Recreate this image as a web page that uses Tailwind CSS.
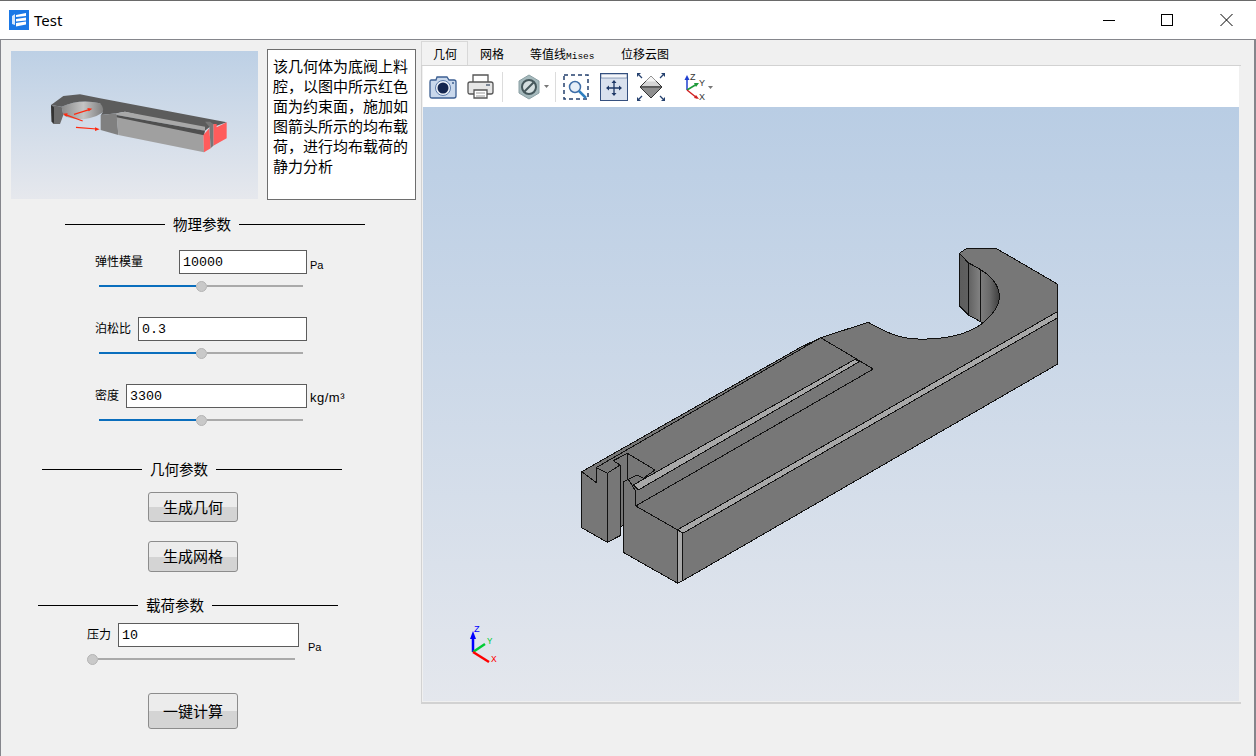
<!DOCTYPE html>
<html lang="zh">
<head>
  <meta charset="UTF-8">
  <title>Test</title>
  <script src="https://cdn.jsdelivr.net/npm/@tailwindcss/browser@4"></script>
</head>
<body class="w-[1256px] h-[756px] overflow-hidden bg-white text-black font-['Noto_Sans_CJK_SC','Noto_Sans',sans-serif]">

  <div class="h-[1px] bg-[#6a6a6a]"></div>

  <!-- Title bar -->
  <div class="h-[38px] flex items-center pl-[9px]">
    <svg class="w-[20px] h-[20px]" viewBox="0 0 20 20">
      <rect width="20" height="20" fill="#1a78e6"/>
      <path d="M3 6l3-2v11l-3-1z" fill="#d5e6fb"/>
      <path d="M7 5l10-2v3l-10 1zM7 9l10-1.500v3l-10 1zM7 13l10-1.500v3l-10 2z" fill="#ffffff"/>
    </svg>
    <span class="ml-[5px] text-[15px] font-['Noto_Sans',sans-serif]">Test</span>
    <div class="ml-auto flex items-center">
      <svg class="w-[58px] h-[14px]" viewBox="0 0 58 14"><path d="M0 7.500h12" stroke="#000" fill="none"/></svg>
      <svg class="w-[59px] h-[14px]" viewBox="0 0 59 14"><rect x="0.500" y="1.500" width="11" height="11" stroke="#000" fill="none"/></svg>
      <svg class="w-[36px] h-[14px]" viewBox="0 0 36 14"><path d="M0.500 1l12 12M12.500 1l-12 12" stroke="#000" fill="none"/></svg>
    </div>
  </div>

  <!-- Window content -->
  <div class="h-[717px] flex bg-[#f0f0f0] border-t border-l border-r-2 border-[#85868c]">

    <!-- Left panel -->
    <div class="w-[420px] shrink-0">
      <div class="mt-[9px] ml-[10px] flex items-center">
        <svg class="w-[247px] h-[148px] bg-linear-to-b from-[#bdd0e5] to-[#e6e8ed]" viewBox="33 153 741 444">
          <defs>
            <linearGradient id="wallThumb" x1="0" x2="1" y1="0" y2="0">
              <stop offset="0" stop-color="#8a8a8a"/>
              <stop offset="0.500" stop-color="#c4c4c4"/>
              <stop offset="1" stop-color="#777777"/>
            </linearGradient>
          </defs>
          <path d="M185 320Q240 295 300 310Q318 322 315 330Q300 350 250 358Q210 358 190 345z" fill="url(#wallThumb)"/>
          <path d="M153 315L190 288L240 283L300 295L680 367L648 378L640 372L615 392L375 335L350 340L303 345Q318 328 300 310Q240 295 185 320z" fill="#5c5c5c"/>
          <path d="M153 315L185 320L190 345L180 372L160 372L155 365z" fill="#6b6b6b"/>
          <path d="M153 315L162 322L162 370L155 365z" fill="#333333"/>
          <path d="M302 345L350 340L355 405L302 390z" fill="#808080"/>
          <path d="M350 348L610 402L612 457L355 405z" fill="#a0a0a0"/>
          <path d="M350 340L375 335L615 380L615 392L350 345z" fill="#a8a8a8"/>
          <path d="M350 345L615 392L612 406L350 352z" fill="#4f4f4f"/>
          <path d="M610 405L628 385L632 445L612 457z" fill="#ff5c5c"/>
          <path d="M640 372L650 372L650 382L680 367L680 415L640 437z" fill="#ff5c5c"/>
          <path d="M615 365L630 365L640 372L640 437L632 445L628 380z" fill="#777777"/>
          <g stroke="#ff2a10" stroke-width="3.500" fill="#ff2a10">
            <path d="M222 343L270 328" fill="none"/><path d="M277 326L262 324L266 334z" stroke="none"/>
            <path d="M248 363L196 344" fill="none"/><path d="M189 341L203 340L199 350z" stroke="none"/>
            <path d="M228 382L290 387" fill="none"/><path d="M299 388L285 382L285 393z" stroke="none"/>
          </g>
        </svg>
        <div class="ml-[9px] w-[149px] h-[151px] border border-[#6e6e6e] bg-white pl-[5px] pr-[2px] pt-[6px] text-[15px] leading-[20px]">该几何体为底阀上料腔，以图中所示红色面为约束面，施加如图箭头所示的均布载荷，进行均布载荷的静力分析</div>
      </div>

      <!-- 物理参数 -->
      <div class="mt-[15px] ml-[64px] w-[300px] h-[18px] flex items-center gap-[8px]">
        <div class="w-[100px] h-[1px] bg-black"></div>
        <span class="text-[14.500px] leading-[18px]">物理参数</span>
        <div class="flex-1 h-[1px] bg-black"></div>
      </div>

      <div class="mt-[17px] ml-[94px] flex">
        <label class="w-[84px] text-[12px] leading-[22px]">弹性模量</label>
        <input class="w-[128px] h-[24px] border border-[#5c5c5c] bg-white pl-[3px] text-[13.330px] font-['Liberation_Mono',monospace]" value="10000">
        <span class="ml-[3px] mt-[6px] text-[11px] leading-[18px] font-['Liberation_Sans',sans-serif]">Pa</span>
      </div>
      <div class="mt-[6px] ml-[98px] w-[204px] h-[12px] flex items-center">
        <div class="w-[97px] h-[2px] bg-[#0a6ebd]"></div>
        <div class="w-[11px] h-[11px] rounded-full bg-[#c9c9c9] border border-[#b4b4b4]"></div>
        <div class="w-[96px] h-[2px] bg-[#aaaaaa]"></div>
      </div>

      <div class="mt-[25px] ml-[94px] flex">
        <label class="w-[43px] text-[12px] leading-[22px]">泊松比</label>
        <input class="w-[169px] h-[24px] border border-[#5c5c5c] bg-white pl-[3px] text-[13.330px] font-['Liberation_Mono',monospace]" value="0.3">
      </div>
      <div class="mt-[6px] ml-[98px] w-[204px] h-[12px] flex items-center">
        <div class="w-[97px] h-[2px] bg-[#0a6ebd]"></div>
        <div class="w-[11px] h-[11px] rounded-full bg-[#c9c9c9] border border-[#b4b4b4]"></div>
        <div class="w-[96px] h-[2px] bg-[#aaaaaa]"></div>
      </div>

      <div class="mt-[25px] ml-[94px] flex">
        <label class="w-[31px] text-[12px] leading-[22px]">密度</label>
        <input class="w-[181px] h-[24px] border border-[#5c5c5c] bg-white pl-[3px] text-[13.330px] font-['Liberation_Mono',monospace]" value="3300">
        <span class="ml-[3px] mt-[5px] text-[13px] tracking-[0.5px] leading-[18px] whitespace-nowrap font-['Liberation_Sans',sans-serif]">kg/m³</span>
      </div>
      <div class="mt-[6px] ml-[98px] w-[204px] h-[12px] flex items-center">
        <div class="w-[97px] h-[2px] bg-[#0a6ebd]"></div>
        <div class="w-[11px] h-[11px] rounded-full bg-[#c9c9c9] border border-[#b4b4b4]"></div>
        <div class="w-[96px] h-[2px] bg-[#aaaaaa]"></div>
      </div>

      <!-- 几何参数 -->
      <div class="mt-[34px] ml-[41px] w-[300px] h-[18px] flex items-center gap-[8px]">
        <div class="w-[100px] h-[1px] bg-black"></div>
        <span class="text-[14.500px] leading-[18px]">几何参数</span>
        <div class="flex-1 h-[1px] bg-black"></div>
      </div>
      <button class="block mt-[14px] ml-[147px] w-[90px] h-[30px] rounded-[3px] border border-[#8c8c8c] bg-[linear-gradient(#ececec_50%,#d4d4d4_50%)] text-[15px]">生成几何</button>
      <button class="block mt-[19px] ml-[147px] w-[90px] h-[31px] rounded-[3px] border border-[#8c8c8c] bg-[linear-gradient(#ececec_50%,#d4d4d4_50%)] text-[15px]">生成网格</button>

      <!-- 载荷参数 -->
      <div class="mt-[24px] ml-[37px] w-[300px] h-[18px] flex items-center gap-[8px]">
        <div class="w-[100px] h-[1px] bg-black"></div>
        <span class="text-[14.500px] leading-[18px]">载荷参数</span>
        <div class="flex-1 h-[1px] bg-black"></div>
      </div>
      <div class="mt-[9px] ml-[86px] flex h-[24px]">
        <label class="w-[31px] text-[12px] leading-[22px]">压力</label>
        <input class="w-[181px] h-[24px] border border-[#5c5c5c] bg-white pl-[3px] text-[13.330px] font-['Liberation_Mono',monospace]" value="10">
        <span class="ml-[9px] mt-[15px] text-[11px] leading-[18px] font-['Liberation_Sans',sans-serif]">Pa</span>
      </div>
      <div class="mt-[6px] ml-[86px] w-[208px] h-[12px] flex items-center">
        <div class="w-[11px] h-[11px] rounded-full bg-[#c9c9c9] border border-[#b4b4b4]"></div>
        <div class="flex-1 h-[2px] bg-[#aaaaaa]"></div>
      </div>
      <button class="block mt-[28px] ml-[147px] w-[90px] h-[36px] rounded-[3px] border border-[#8c8c8c] bg-[linear-gradient(#ececec_50%,#d4d4d4_50%)] text-[15px]">一键计算</button>
    </div>

    <!-- Right panel -->
    <div class="w-[820px]">
      <div class="h-[25px] pt-[1px] flex items-stretch text-[12px]">
        <div class="w-[47px] border border-b-0 border-[#d8d8d8] bg-[#f2f2f2] pl-[11px] leading-[24px]">几何</div>
        <div class="w-[50px] pl-[12px] leading-[25px]">网格</div>
        <div class="w-[91px] pl-[12px] leading-[25px] whitespace-nowrap">等值线<span class="text-[9.500px] font-['Liberation_Mono',monospace]">Mises</span></div>
        <div class="pl-[12px] leading-[25px]">位移云图</div>
      </div>
      <div class="w-[820px] h-[639px] border-t border-l border-b-2 border-[#d2d2d2] pl-[1px] pr-[2px] pb-[1px]">
        <!-- Toolbar -->
        <div class="h-[41px] bg-white flex items-center pl-[6px]">
          <svg class="w-[28px] h-[24px]" viewBox="0 0 28 24">
            <path d="M2 5h5l1-3h10l2 3h5q2 0 2 2v14q0 2-2 2H3q-2 0-2-2V7q0-2 1-2z" fill="#c9d8ec" stroke="#3c5f92" stroke-width="1.300"/>
            <circle cx="14" cy="13" r="7.500" fill="#eef3fa" stroke="#5c7cab"/>
            <circle cx="14" cy="13" r="5.500" fill="#14264f"/>
            <circle cx="24" cy="8" r="1" fill="#3c5f92"/>
          </svg>
          <svg class="ml-[10px] w-[27px] h-[27px]" viewBox="0 0 27 27">
            <path d="M6 9V2h15v7" fill="#fff" stroke="#555" stroke-width="1.300"/>
            <path d="M3 9h21q2 0 2 2v8q0 2-2 2H3q-2 0-2-2v-8q0-2 2-2z" fill="#e6e6e6" stroke="#555" stroke-width="1.300"/>
            <rect x="19" y="11" width="4" height="2" fill="#7c8796"/>
            <path d="M7 17h13v8H7z" fill="#fff" stroke="#555" stroke-width="1.300"/>
            <path d="M9 20h9M9 23h9" stroke="#999"/>
          </svg>
          <div class="ml-[8px] w-[1px] h-[30px] bg-[#dcdcdc]"></div>
          <svg class="ml-[14px] w-[24px] h-[26px]" viewBox="0 0 24 26">
            <path d="M12 1l10 6v12l-10 6-10-6V7z" fill="#a5b9bc" stroke="#8ba0a4"/>
            <circle cx="12" cy="13" r="7" fill="#d5dfe0" stroke="#46585c" stroke-width="2"/>
            <path d="M7.500 17.500l9-9" stroke="#46585c" stroke-width="2"/>
          </svg>
          <svg class="ml-[3px] w-[5px] h-[3px]" viewBox="0 0 5 3"><path d="M0 0h5L2.500 3z" fill="#777"/></svg>
          <div class="ml-[6px] w-[1px] h-[30px] bg-[#dcdcdc]"></div>
          <svg class="ml-[7px] w-[26px] h-[26px]" viewBox="0 0 26 26">
            <rect x="1" y="1" width="24" height="24" fill="none" stroke="#24406e" stroke-width="1.500" stroke-dasharray="4 3"/>
            <circle cx="12" cy="13" r="5.500" fill="#e6eef8" stroke="#3f6ea8" stroke-width="1.500"/>
            <path d="M16 17l7 7" stroke="#2f7fc0" stroke-width="2.500"/>
          </svg>
          <svg class="ml-[11px] w-[28px] h-[28px]" viewBox="0 0 28 28">
            <rect x="0.500" y="0.500" width="27" height="27" fill="#d9e1ee" stroke="#35507f"/>
            <rect x="1" y="1" width="26" height="4" fill="#f4f6fa" stroke="#35507f" stroke-width="0.500"/>
            <path d="M14 9v12M8 15h12" stroke="#1d3766" stroke-width="1.300"/>
            <path d="M14 7l-2.500 3h5zM14 23l-2.500-3h5zM6 15l3-2.500v5zM22 15l-3-2.500v5z" fill="#1d3766"/>
          </svg>
          <svg class="ml-[9px] w-[28px] h-[28px]" viewBox="0 0 28 28">
            <path d="M14 3l11 11H3z" fill="#d6d6d6" stroke="#333"/>
            <path d="M3 14h22L14 25z" fill="#8f8f8f" stroke="#333"/>
            <path d="M14 3L8.500 8.500h11z" fill="#f4f4f4"/>
            <path d="M2 2l3 3M26 2l-3 3M2 26l3-3M26 26l-3-3" stroke="#24406e" stroke-width="1.300"/>
            <path d="M0 0h4L0 4zM28 0h-4l4 4zM0 28h4l-4-4zM28 28h-4l4-4z" fill="#24406e"/>
          </svg>
          <svg class="ml-[18px] w-[31px] h-[28px]" viewBox="0 0 31 28">
            <path d="M4 17V5" stroke="#1f3fd0" stroke-width="1.500"/><path d="M4 2L1.500 7h5z" fill="#1f3fd0"/>
            <path d="M4 17l10-6" stroke="#1f9a3a" stroke-width="1.500"/><path d="M16 10l-5 0 2 4z" fill="#1f9a3a"/>
            <path d="M4 17l10 8" stroke="#d01f1f" stroke-width="1.500"/><path d="M16 26l-5-1 2-3z" fill="#d01f1f"/>
            <text x="7" y="7" font-size="9" fill="#333" font-family="Liberation Sans">Z</text>
            <text x="16" y="13" font-size="9" fill="#333" font-family="Liberation Sans">Y</text>
            <text x="16" y="27" font-size="9" fill="#333" font-family="Liberation Sans">X</text>
            <path d="M25 13h5l-2.500 3z" fill="#777"/>
          </svg>
        </div>
        <!-- Viewport -->
        <svg class="block w-[816px] h-[594px] bg-linear-to-b from-[#b9cde4] to-[#e4e7ed]" viewBox="423 107 816 594">
          <defs>
            <linearGradient id="holeWall" gradientUnits="userSpaceOnUse" x1="959" x2="1000" y1="0" y2="0">
              <stop offset="0" stop-color="#5c5c5c"/>
              <stop offset="0.220" stop-color="#606060"/>
              <stop offset="0.500" stop-color="#808080"/>
              <stop offset="0.750" stop-color="#6a6a6a"/>
              <stop offset="1" stop-color="#3c3c3c"/>
            </linearGradient>
          </defs>
          <g shape-rendering="crispEdges" stroke="#111111" stroke-width="1">
            <!-- body outline -->
            <path fill="#777777" d="M959.300 253.300L966.700 248.300L996 248.300L1057.300 284L1057.300 364.300L682.700 580.700L677.700 583.300L623.300 552.300L623.300 525.300L620 527.300L620 535.700L607.300 542.300L581.700 527.700L581.700 471.700L800 347.600L820.700 337.700L868.300 322.300C885 332 900 339 918 339C940 340 966 336 983 323L968.300 315L959.300 306z"/>
            <!-- hole wall -->
            <path fill="url(#holeWall)" d="M959.300 253.300L968.300 262.700L980 269.300C990 275 999 285 999.300 295C1000 305 994 313 983 323L968.300 315L959.300 306z"/>
            <path fill="none" d="M968.300 262.700V315M980 269.300V321"/>
            <!-- long grooves -->
            <path fill="#a8a8a8" d="M678.300 529.300L1057.300 311.700V318L682.700 533.300z"/>
            <path fill="#a8a8a8" d="M677.700 530L682.700 533.300V580.700L677.700 583.300z"/>
            <path fill="#a8a8a8" d="M633.300 485L855 359.300L859.300 361.700L638.300 490z"/>
            <path fill="none" d="M635.700 506L873.300 369L820.700 337.700M596 467.700L820.700 337.700"/>
            <path fill="none" d="M635.700 506L677.700 530"/>
            <!-- notch at the end -->
            <path fill="none" d="M581.700 471.700L596 482.300V467.700L607.300 473.300L620 465L613.300 460.700L627.300 453.300L655 470L643.300 478.300L636.700 475L623.300 481.700"/>
            <path fill="none" d="M607.300 473.300V542.300M620 465V527.300M627.300 453.300V480"/>
            <path fill="none" d="M623.300 481.700V525.300M623.300 481.700L628.300 479.300L635 490V506"/>
          </g>
          <!-- triad -->
          <g stroke-width="2.500">
            <path d="M473 652V636" stroke="#0000ff"/><path d="M473 631l-3 8h6z" fill="#0000ff"/>
            <path d="M473 652L485 644" stroke="#00cc33"/>
            <path d="M473 652L489 662" stroke="#ff0000"/>
          </g>
          <text x="474" y="632" font-size="9.500" fill="#0000ff" font-family="Liberation Mono">Z</text>
          <text x="487" y="644" font-size="9" fill="#00cc33" font-family="Liberation Mono">Y</text>
          <text x="491" y="662" font-size="9.500" fill="#ff0000" font-family="Liberation Mono">X</text>
        </svg>
      </div>
    </div>
  </div>

</body>
</html>
